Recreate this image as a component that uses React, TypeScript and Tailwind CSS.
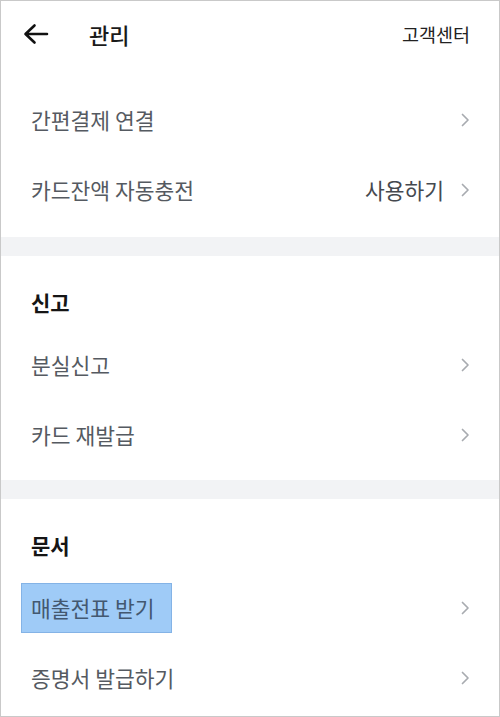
import React from "react";

const font = { fontFamily: '"Noto Sans CJK KR", "Noto Sans", sans-serif' };

function Chevron() {
  return (
    <svg width="10" height="16" viewBox="0 0 10 16" className="shrink-0">
      <path d="M2.5 2.5 L8 8 L2.5 13.5" fill="none" stroke="#a8abb0" strokeWidth="1.7" strokeLinecap="round" strokeLinejoin="round" />
    </svg>
  );
}

function Row({ label, right, highlight }: { label: string; right?: string; highlight?: boolean }) {
  return (
    <div className="h-[70px] flex items-center pl-[30px] pr-[29px]">
      <div className="flex-1 flex items-center">
        {highlight ? (
          <span className="-ml-[10px] h-[50px] w-[151px] flex items-center pl-[9px] bg-[#9fcbf7] border border-[#84b3e6] text-[21.5px] text-[#435870] leading-none whitespace-nowrap">
            {label}
          </span>
        ) : (
          <span className="text-[21.5px] text-[#555a61] leading-none">{label}</span>
        )}
      </div>
      {right && <span className="text-[21.5px] text-[#45494f] mr-[16px] leading-none">{right}</span>}
      <Chevron />
    </div>
  );
}

function Heading({ children }: { children: React.ReactNode }) {
  return (
    <div className="pl-[30px] pt-[34px] pb-[14px] h-[74px]">
      <span className="text-[21px] font-bold text-[#151515] leading-[24px] block">{children}</span>
    </div>
  );
}

export default function App() {
  return (
    <div style={font} className="w-[500px] h-[717px] border border-[#c9c9c9] bg-white flex flex-col overflow-hidden">
      <div className="h-[66px] flex items-center pl-[21px] pr-[29px]">
        <svg width="28" height="24" viewBox="0 0 28 24" className="shrink-0">
          <path d="M25 12 H4 M12.5 3.5 L3.5 12 L12.5 20.5" fill="none" stroke="#111" strokeWidth="2.6" strokeLinecap="round" strokeLinejoin="round" />
        </svg>
        <span className="ml-[39px] text-[22px] font-medium text-[#1a1a1a] leading-none">관리</span>
        <span className="ml-auto text-[18.5px] text-[#222] leading-none">고객센터</span>
      </div>
      <div className="pt-[18px] pb-[12px]">
        <Row label="간편결제 연결" />
        <Row label="카드잔액 자동충전" right="사용하기" />
      </div>
      <div className="h-[19px] bg-[#f2f3f5] shrink-0" />
      <div className="pb-[10px]">
        <Heading>신고</Heading>
        <Row label="분실신고" />
        <Row label="카드 재발급" />
      </div>
      <div className="h-[19px] bg-[#f2f3f5] shrink-0" />
      <div>
        <Heading>문서</Heading>
        <Row label="매출전표 받기" highlight />
        <Row label="증명서 발급하기" />
      </div>
    </div>
  );
}
